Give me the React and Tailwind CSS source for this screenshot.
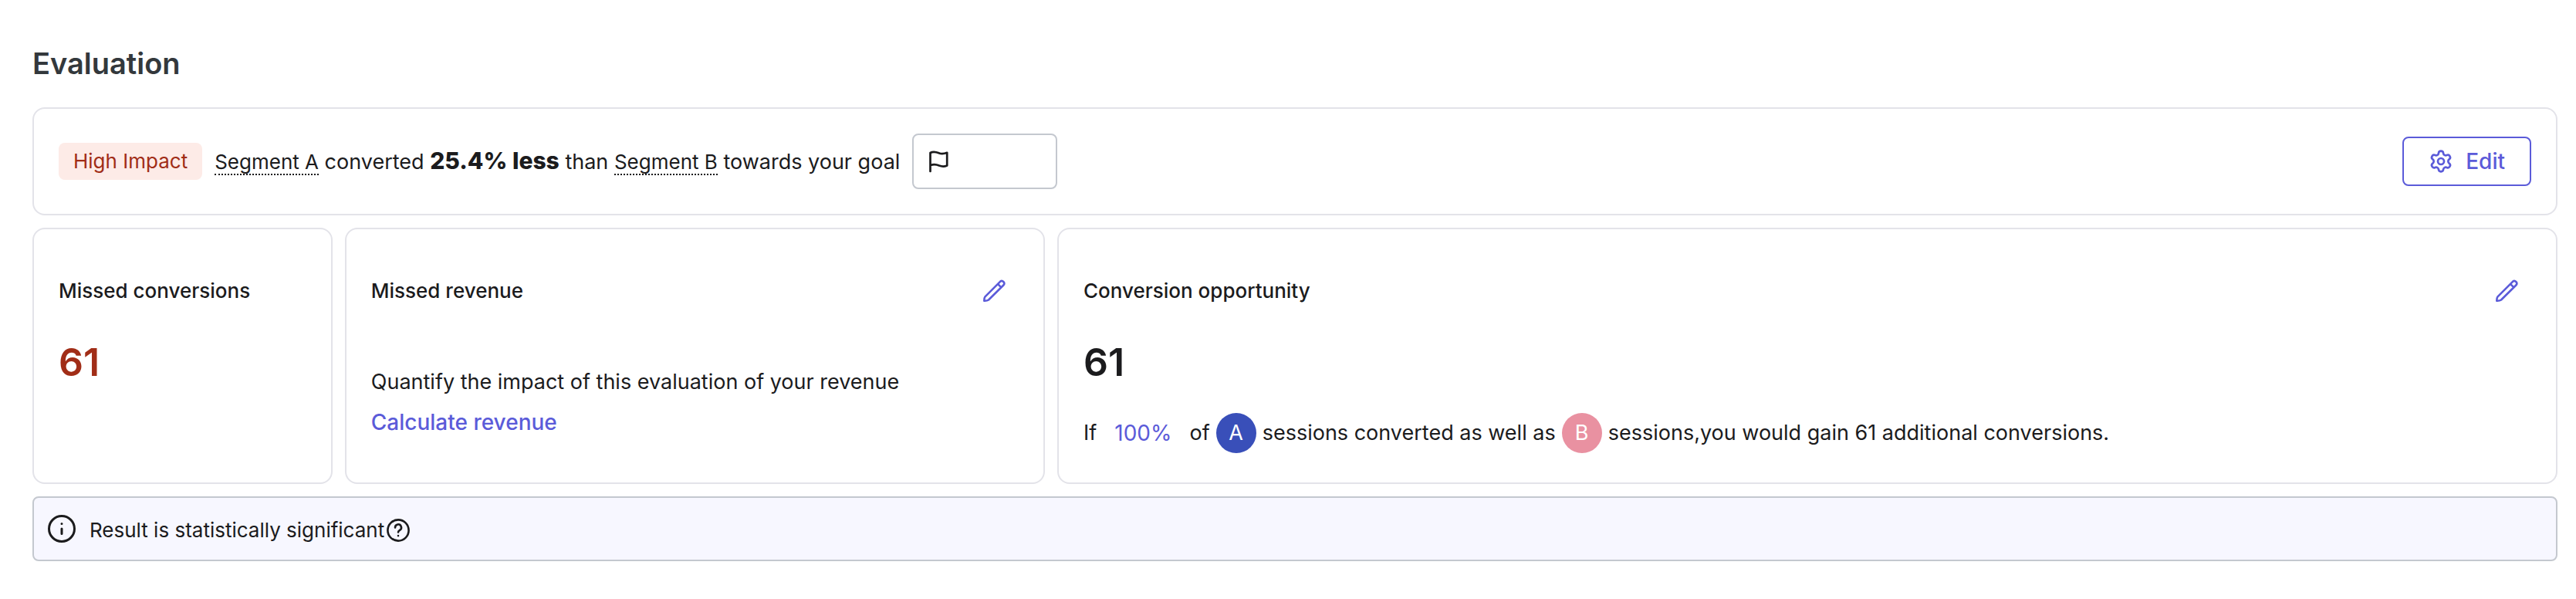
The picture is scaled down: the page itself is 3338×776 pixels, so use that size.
import React from "react";
import { Settings } from "lucide-react";

const PencilIcon = () => (
  <svg viewBox="0 0 32 32" fill="none" stroke="currentColor" strokeWidth="2.6" strokeLinecap="round" strokeLinejoin="round" className="size-8">
    <path d="M3.3 28.7c0-2.5.3-4.3 1.2-5.4L24 3.8a3.2 3.2 0 0 1 4.5 4.500L9 27.500c-1.300 1-3.200 1.300-5.700 1.200zM21 6.900l4.400 4.400" />
  </svg>
);

const FlagIcon = () => (
  <svg viewBox="0 0 32 32" fill="none" stroke="currentColor" strokeWidth="2.7" strokeLinecap="round" strokeLinejoin="round" className="size-8">
    <path d="M5.500 29V5c4.500-2.600 8.500-.8 11.500.4 3.800 1.500 6.500.8 10.200-.6v16.800c-4 1.700-7 1.300-10.200 0-4-1.800-7.500-2.200-11.500-.2" />
  </svg>
);

const InfoIcon = () => (
  <svg viewBox="0 0 36 36" fill="none" stroke="currentColor" strokeWidth="3" strokeLinecap="round" className="size-9">
    <circle cx="18" cy="18" r="16.5" />
    <path d="M18 18v6.500M18 11.500v.1" />
  </svg>
);

const HelpIcon = () => (
  <svg viewBox="0 0 32 32" fill="none" stroke="currentColor" strokeWidth="2.6" strokeLinecap="round" strokeLinejoin="round" className="size-8">
    <circle cx="16" cy="16" r="13.6" />
    <path d="M12 12.500a4 4 0 1 1 6 3.300c-1.300.8-2 1.500-2 2.600M16 23v.1" />
  </svg>
);

const Card = ({ title, onEdit, children }) => (
  <section className="rounded-2xl border-2 border-[#e3e3e9] px-8 pt-12 pb-[38px]">
    <div className="flex h-16 items-center justify-between">
      <h2 className="text-[26px] leading-10 font-medium">{title}</h2>
      {onEdit && (
        <button type="button" aria-label={`Edit ${title}`} className="flex size-16 items-center justify-center text-[#5b5bd9]">
          <PencilIcon />
        </button>
      )}
    </div>
    {children}
  </section>
);

const Segment = ({ name, className }) => (
  <span className={`flex size-[52px] items-center justify-center rounded-full text-white ${className}`}>{name}</span>
);

function App() {
  return (
    <main className="min-h-screen bg-white pr-6 pl-[42px] pt-[58px] pb-12 font-['Inter',sans-serif] text-[27px] leading-10 text-[#1b1b1d]">
      <h1 className="mb-[33px] text-[38px] leading-[48px] font-semibold text-[#33383c]">Evaluation</h1>

      <div className="flex flex-col gap-4">
        {/* Summary */}
        <section className="flex items-center justify-between rounded-2xl border-2 border-[#e3e3e9] p-8">
          <div className="flex items-center gap-4">
            <span className="flex h-12 items-center rounded-lg bg-[#fdebe7] px-[19px] text-[26px] text-[#a12d17]">High Impact</span>
            <p className="whitespace-nowrap">
              <span className="border-b-2 border-dotted border-[#1b1b1d] text-[26px]">Segment A</span> converted{" "}
              <strong className="text-[30px] font-extrabold">25.4% less</strong> than{" "}
              <span className="border-b-2 border-dotted border-[#1b1b1d] text-[26px]">Segment B</span> towards your goal
            </p>
            <div className="flex h-[72px] w-[188px] items-center rounded-lg border-2 border-[#c4c8cf] px-4">
              <FlagIcon />
            </div>
          </div>
          <button type="button" className="flex h-16 items-center gap-4 rounded-lg border-2 border-[#5b5bd9] px-8 text-[28px] font-medium text-[#5b5bd9]">
            <Settings className="size-8" />
            Edit
          </button>
        </section>

        {/* Metrics */}
        <div className="grid grid-cols-[12fr_28fr_60fr] gap-4">
          <Card title="Missed conversions">
            <p className="mt-8 text-[50px] leading-14 font-semibold text-[#a12d17]">61</p>
          </Card>

          <Card title="Missed revenue" onEdit>
            <p className="mt-[66px]">Quantify the impact of this evaluation of your revenue</p>
            <a href="#revenue" className="mt-3 block text-[28px] font-medium text-[#5b5bd9]">
              Calculate revenue
            </a>
          </Card>

          <Card title="Conversion opportunity" onEdit>
            <p className="mt-8 text-[50px] leading-14 font-semibold">61</p>
            <div className="mt-[38px] flex h-[52px] items-center gap-2 whitespace-nowrap">
              <span>If</span>
              <button type="button" className="px-[15px] text-[28px] text-[#5b5bd9]">100%</button>
              <span>of</span>
              <Segment name="A" className="bg-[#394fb9]" />
              <span>sessions converted as well as</span>
              <Segment name="B" className="bg-[#e991a1]" />
              <span>sessions,you would gain 61 additional conversions.</span>
            </div>
          </Card>
        </div>

        {/* Significance note */}
        <div className="flex h-[84px] items-center rounded-lg border-2 border-[#c4c8cf] bg-[#f7f7ff] px-[18px]">
          <InfoIcon />
          <div className="flex items-center gap-0.5 pt-1 pl-[18px]">
            <p className="text-[26px]">Result is statistically significant</p>
            <button type="button" aria-label="About significance">
              <HelpIcon />
            </button>
          </div>
        </div>
      </div>
    </main>
  );
}

export default App;
